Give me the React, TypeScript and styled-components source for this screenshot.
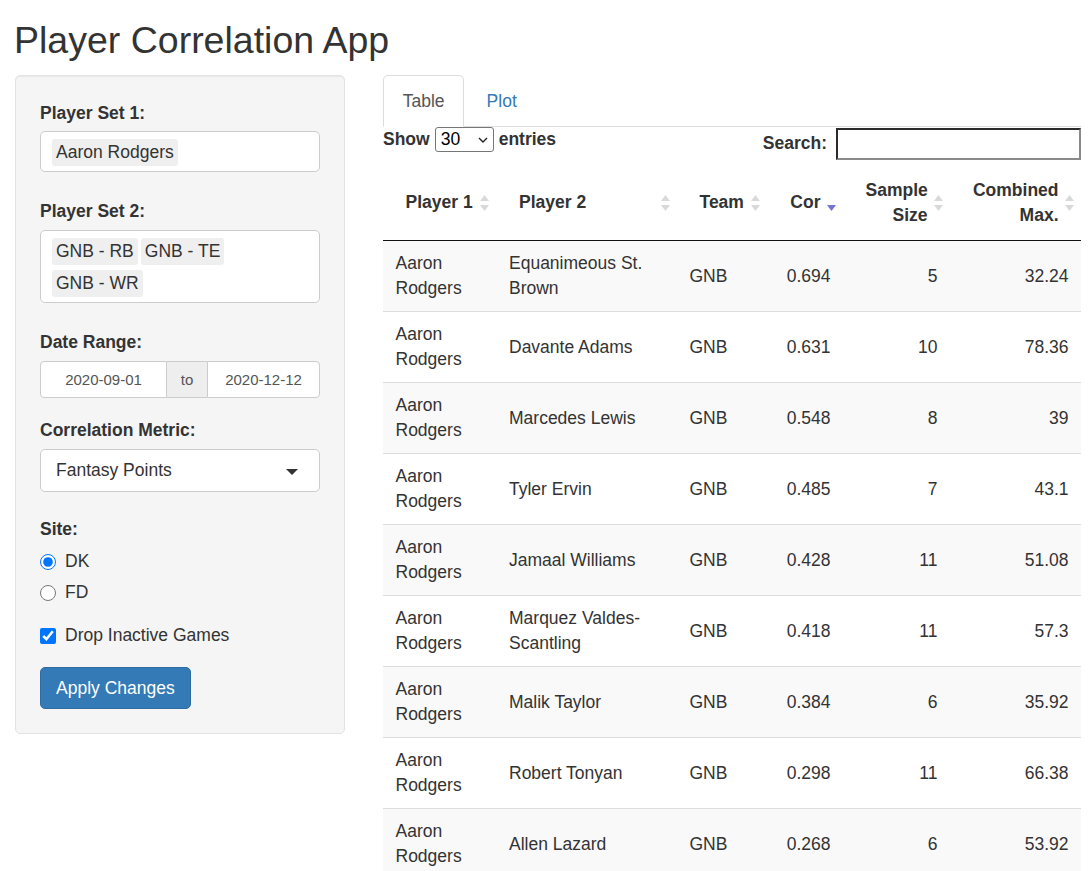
import React from "react";
import styled, { createGlobalStyle, css } from "styled-components";

const GlobalStyle = createGlobalStyle`
  html, body {
    margin: 0;
    padding: 0;
    background: #fff;
  }
  html::-webkit-scrollbar { width: 0; height: 0; }
  body {
    font-family: "Liberation Sans", Arial, Helvetica, sans-serif;
    font-size: 17.5px;
    line-height: 25px;
    color: #333;
  }
  * { box-sizing: border-box; }
`;

type Align = "left" | "right";

interface IColumn {
  title: string;
  width: number;
  align: Align;
  sort?: "none" | "desc";
}

interface IRow {
  p1: string;
  p2: string;
  team: string;
  cor: string;
  n: number;
  max: string;
}

const columns: IColumn[] = [
  { title: "Player 1", width: 113.5, align: "left", sort: "none" },
  { title: "Player 2", width: 180.5, align: "left", sort: "none" },
  { title: "Team", width: 90, align: "left", sort: "none" },
  { title: "Cor", width: 76, align: "right", sort: "desc" },
  { title: "Sample Size", width: 107, align: "right", sort: "none" },
  { title: "Combined Max.", width: 131, align: "right", sort: "none" },
];

const rows: IRow[] = [
  { p1: "Aaron Rodgers", p2: "Equanimeous St. Brown", team: "GNB", cor: "0.694", n: 5, max: "32.24" },
  { p1: "Aaron Rodgers", p2: "Davante Adams", team: "GNB", cor: "0.631", n: 10, max: "78.36" },
  { p1: "Aaron Rodgers", p2: "Marcedes Lewis", team: "GNB", cor: "0.548", n: 8, max: "39" },
  { p1: "Aaron Rodgers", p2: "Tyler Ervin", team: "GNB", cor: "0.485", n: 7, max: "43.1" },
  { p1: "Aaron Rodgers", p2: "Jamaal Williams", team: "GNB", cor: "0.428", n: 11, max: "51.08" },
  { p1: "Aaron Rodgers", p2: "Marquez Valdes-Scantling", team: "GNB", cor: "0.418", n: 11, max: "57.3" },
  { p1: "Aaron Rodgers", p2: "Malik Taylor", team: "GNB", cor: "0.384", n: 6, max: "35.92" },
  { p1: "Aaron Rodgers", p2: "Robert Tonyan", team: "GNB", cor: "0.298", n: 11, max: "66.38" },
  { p1: "Aaron Rodgers", p2: "Allen Lazard", team: "GNB", cor: "0.268", n: 6, max: "53.92" },
];

const S = {
  Page: styled.div`
    padding: 0 15px;
  `,
  Title: styled.h2`
    margin: 20px 0 14px -1px;
    font-size: 37.5px;
    font-weight: 400;
    line-height: 41.25px;
    color: #333;
  `,
  Layout: styled.div`
    display: grid;
    grid-template-columns: 330px 698px;
    column-gap: 38px;
    align-items: start;
  `,

  /* sidebar */
  Well: styled.div`
    background: #f5f5f5;
    border: 1px solid #e3e3e3;
    border-radius: 5px;
    padding: 23px 24px 24px;
    box-shadow: inset 0 1px 1px rgba(0, 0, 0, 0.05);
  `,
  Group: styled.div<{ $mb: number }>`
    margin-bottom: ${({ $mb }) => $mb}px;
  `,
  Label: styled.label<{ $mb: number }>`
    display: block;
    padding-top: 2px;
    font-weight: 700;
    margin-bottom: ${({ $mb }) => $mb}px;
  `,
  Selectize: styled.div`
    display: flex;
    flex-wrap: wrap;
    gap: 5px 3px;
    background: #fff;
    border: 1px solid #ccc;
    border-radius: 5px;
    padding: 7px 11px 5px;
  `,
  Chip: styled.span`
    display: inline-block;
    background: #efefef;
    color: #333;
    border-radius: 3px;
    padding: 1px 4px;
    line-height: 25px;
  `,
  DateRow: styled.div`
    display: flex;
    height: 37px;
    font-size: 15px;
    color: #555;
  `,
  DateField: styled.div<{ $side: "start" | "end" }>`
    display: flex;
    align-items: center;
    justify-content: center;
    background: #fff;
    border: 1px solid #ccc;
    ${({ $side }) =>
      $side === "start"
        ? css`
            width: 127px;
            border-radius: 4px 0 0 4px;
          `
        : css`
            flex: 1;
            border-radius: 0 4px 4px 0;
          `}
  `,
  DateAddon: styled.div`
    width: 40px;
    display: flex;
    align-items: center;
    justify-content: center;
    background: #eee;
    border-top: 1px solid #ccc;
    border-bottom: 1px solid #ccc;
  `,
  Select: styled.div`
    height: 43px;
    display: flex;
    align-items: center;
    justify-content: space-between;
    background: #fff;
    border: 1px solid #ccc;
    border-radius: 5px;
    padding: 0 21px 0 15px;
  `,
  Caret: styled.span`
    width: 0;
    height: 0;
    border-style: solid;
    border-width: 6.5px 6.5px 0;
    border-color: #333 transparent transparent;
    margin-top: 2px;
  `,
  Choice: styled.label<{ $mb: number }>`
    display: flex;
    align-items: center;
    gap: 9px;
    height: 25px;
    margin-bottom: ${({ $mb }) => $mb}px;
    input {
      width: 16px;
      height: 16px;
      margin: 0;
      accent-color: #0075ff;
    }
  `,
  Button: styled.button`
    font-family: inherit;
    font-size: 17.5px;
    line-height: 25px;
    color: #fff;
    background: #337ab7;
    border: 1px solid #2e6da4;
    border-radius: 5px;
    padding: 7.5px 15px;
    cursor: pointer;
  `,

  /* main */
  Tabs: styled.div`
    display: flex;
    border-bottom: 1px solid #ddd;
  `,
  Tab: styled.div<{ $active?: boolean }>`
    padding: 12.5px 18.75px;
    margin-right: 2.5px;
    margin-bottom: -1px;
    border: 1px solid transparent;
    border-radius: 5px 5px 0 0;
    color: #337ab7;
    ${({ $active }) =>
      $active &&
      css`
        color: #555;
        background: #fff;
        border-color: #ddd #ddd transparent;
      `}
  `,
  Controls: styled.div`
    display: flex;
    justify-content: space-between;
    align-items: flex-start;
    font-weight: 700;
  `,
  Length: styled.div`
    display: flex;
    align-items: center;
    gap: 5px;
    height: 25px;
  `,
  LengthSelect: styled.div`
    display: flex;
    align-items: center;
    justify-content: space-between;
    width: 59px;
    height: 25px;
    padding: 0 5px 0 5px;
    border: 1px solid #767676;
    border-radius: 3px;
    background: #fff;
    font-weight: 400;
    color: #000;
  `,
  Filter: styled.div`
    display: flex;
    align-items: center;
    gap: 9px;
    height: 32px;
    padding-top: 1px;
  `,
  SearchBox: styled.input`
    width: 245px;
    height: 32px;
    border-style: solid;
    border-width: 2px;
    border-color: #2b2b2b #8a8a8a #8a8a8a #2b2b2b;
    background: #fff;
    margin: 0;
    padding: 0 4px;
  `,
  Table: styled.table`
    width: 698px;
    margin-top: 6px;
    table-layout: fixed;
    border-collapse: separate;
    border-spacing: 0;
  `,
  Col: styled.col<{ $width: number }>`
    width: ${({ $width }) => $width}px;
  `,
  Th: styled.th<{ $align: Align }>`
    position: relative;
    padding: 12.5px 22.5px;
    text-align: ${({ $align }) => $align};
    vertical-align: middle;
    font-weight: 700;
    border-bottom: 1px solid #111;
  `,
  SortMark: styled.svg`
    position: absolute;
    right: 7.5px;
    top: 50%;
    transform: translateY(-50%);
  `,
  Tr: styled.tr`
    &:nth-child(odd) td {
      background: #f9f9f9;
    }
    &:not(:first-child) td {
      border-top: 1px solid #ddd;
    }
  `,
  Td: styled.td<{ $align: Align }>`
    padding: 10px 12.5px;
    text-align: ${({ $align }) => $align};
    vertical-align: middle;
  `,
};

function SortIcon({ mode }: { mode: "none" | "desc" }) {
  return (
    <S.SortMark width="9" height="16" viewBox="0 0 9 16">
      {mode === "none" && <polygon points="4.5,0 9,6 0,6" fill="#d9d9d9" />}
      <polygon points="0,10 9,10 4.5,16" fill={mode === "desc" ? "#7373d6" : "#d9d9d9"} />
    </S.SortMark>
  );
}

export default function App() {
  return (
    <>
      <GlobalStyle />
      <S.Page>
        <S.Title>Player Correlation App</S.Title>
        <S.Layout>
          <S.Well>
            <S.Group $mb={25}>
              <S.Label $mb={5}>Player Set 1:</S.Label>
              <S.Selectize>
                <S.Chip>Aaron Rodgers</S.Chip>
              </S.Selectize>
            </S.Group>

            <S.Group $mb={25}>
              <S.Label $mb={6}>Player Set 2:</S.Label>
              <S.Selectize>
                <S.Chip>GNB - RB</S.Chip>
                <S.Chip>GNB - TE</S.Chip>
                <S.Chip>GNB - WR</S.Chip>
              </S.Selectize>
            </S.Group>

            <S.Group $mb={18}>
              <S.Label $mb={6}>Date Range:</S.Label>
              <S.DateRow>
                <S.DateField $side="start">2020-09-01</S.DateField>
                <S.DateAddon>to</S.DateAddon>
                <S.DateField $side="end">2020-12-12</S.DateField>
              </S.DateRow>
            </S.Group>

            <S.Group $mb={23}>
              <S.Label $mb={6}>Correlation Metric:</S.Label>
              <S.Select>
                <span>Fantasy Points</span>
                <S.Caret />
              </S.Select>
            </S.Group>

            <S.Group $mb={18}>
              <S.Label $mb={7}>Site:</S.Label>
              <S.Choice $mb={6}>
                <input type="radio" name="site" defaultChecked />
                <span>DK</span>
              </S.Choice>
              <S.Choice $mb={0}>
                <input type="radio" name="site" />
                <span>FD</span>
              </S.Choice>
            </S.Group>

            <S.Choice $mb={19}>
              <input type="checkbox" defaultChecked />
              <span>Drop Inactive Games</span>
            </S.Choice>

            <S.Button type="button">Apply Changes</S.Button>
          </S.Well>

          <div>
            <S.Tabs>
              <S.Tab $active>Table</S.Tab>
              <S.Tab>Plot</S.Tab>
            </S.Tabs>

            <S.Controls>
              <S.Length>
                <span>Show</span>
                <S.LengthSelect>
                  <span>30</span>
                  <svg width="10" height="6" viewBox="0 0 10 6">
                    <polyline points="1,1 5,5 9,1" fill="none" stroke="#222" strokeWidth="1.4" />
                  </svg>
                </S.LengthSelect>
                <span>entries</span>
              </S.Length>
              <S.Filter>
                <span>Search:</span>
                <S.SearchBox type="search" />
              </S.Filter>
            </S.Controls>

            <S.Table>
              <colgroup>
                {columns.map((c) => (
                  <S.Col key={c.title} $width={c.width} />
                ))}
              </colgroup>
              <thead>
                <tr>
                  {columns.map((c) => (
                    <S.Th key={c.title} $align={c.align}>
                      {c.title}
                      <SortIcon mode={c.sort || "none"} />
                    </S.Th>
                  ))}
                </tr>
              </thead>
              <tbody>
                {rows.map((r, i) => (
                  <S.Tr key={i}>
                    <S.Td $align="left">{r.p1}</S.Td>
                    <S.Td $align="left">{r.p2}</S.Td>
                    <S.Td $align="left">{r.team}</S.Td>
                    <S.Td $align="right">{r.cor}</S.Td>
                    <S.Td $align="right">{r.n}</S.Td>
                    <S.Td $align="right">{r.max}</S.Td>
                  </S.Tr>
                ))}
              </tbody>
            </S.Table>
          </div>
        </S.Layout>
      </S.Page>
    </>
  );
}
